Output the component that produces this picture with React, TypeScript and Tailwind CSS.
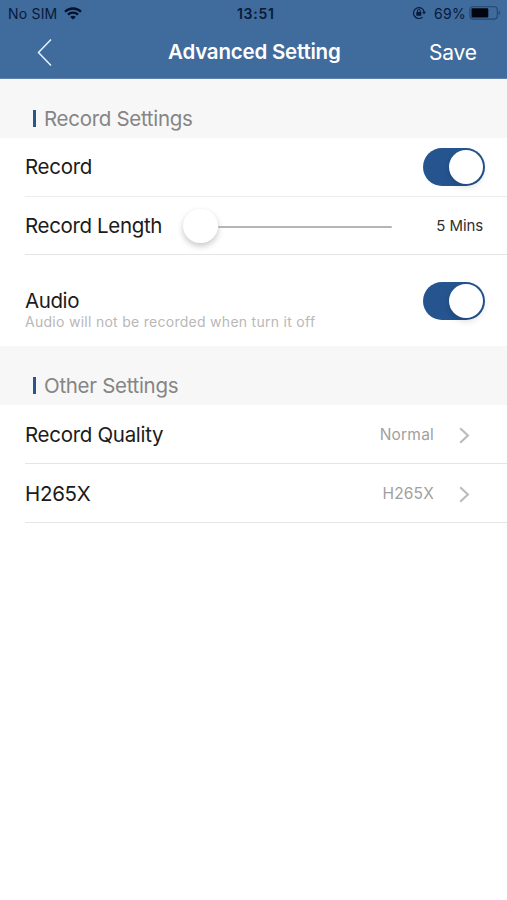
import type { ReactNode } from 'react';

function StatusBar() {
  return (
    <div className="flex h-[27px] items-center text-[14px] leading-[27px] text-[#071a38]">
      <span className="w-[64px] whitespace-nowrap pl-2 tracking-[0.2px]">No SIM</span>
      <svg className="h-[13px] w-[18px]" viewBox="0 0 18 13" fill="none" stroke="#03122c" strokeWidth="2.3">
        <path d="M1 4.7C5.4.4 12.6.4 17 4.7" />
        <path d="M3.9 7.7c2.8-2.7 7.4-2.7 10.2 0" />
        <path d="M6.2 9.9C7.8 8.4 10.2 8.4 11.8 9.9L9 12.6Z" fill="#03122c" stroke="none" />
      </svg>
      <span className="ml-[155px] w-[40px] font-semibold tracking-[0.7px]">13:51</span>
      <svg className="-mt-px ml-[135px] h-[14px] w-[14px]" viewBox="0 0 14 14" fill="none" stroke="#071a38" strokeWidth="1.2">
        <path d="M10.5 11.1A5.4 5.4 0 1 1 12.2 6" />
        <path d="M10.1 5.8h3.8L12 8.5Z" fill="#071a38" stroke="none" />
        <rect x="4.3" y="6.1" width="5" height="3.7" rx=".5" fill="#071a38" stroke="none" />
        <path d="M5.4 6.3V4.9a1.4 1.4 0 0 1 2.8 0v1.4" strokeWidth="1" />
      </svg>
      <span className="ml-2 w-[35px] tracking-[0.3px]">69%</span>
      <svg className="-mt-px h-[14px] w-[32px]" viewBox="0 0 32 14">
        <rect x=".9" y=".7" width="27.4" height="12.4" rx="3" fill="none" stroke="#24466f" strokeWidth="1.1" />
        <rect x="2.5" y="2.3" width="16.8" height="9.2" rx="1.2" fill="#000510" />
        <path d="M29.7 4.8c1.8.5 1.8 3.7 0 4.2Z" fill="#24466f" />
      </svg>
    </div>
  );
}

function SectionTitle({ children }: { children: ReactNode }) {
  return (
    <div className="flex h-[59px] items-end bg-[#f7f7f7] pb-[5px] pl-[33px]">
      <span className="mb-[6px] h-[17px] w-[3px] bg-[#2b568c]" />
      <span className="ml-[8px] text-[20.5px] leading-7 tracking-[-0.3px] text-[#858585]">{children}</span>
    </div>
  );
}

function Toggle() {
  return (
    <span className="flex h-[38px] w-[62px] shrink-0 items-center justify-end rounded-full bg-[#25548f] pr-[2px]">
      <span className="h-[34px] w-[34px] rounded-full bg-white shadow-[0_3px_7px_rgba(0,0,0,0.14)]" />
    </span>
  );
}

function OptionRow({ label, value }: { label: string; value: string }) {
  return (
    <div className="ml-[25px] flex h-[59px] items-center border-b border-[#e5e5e5] pt-[2px]">
      <span className="flex-1 pt-px text-[20.5px] tracking-[-0.3px] text-[#1b1b1b]">{label}</span>
      <span className="text-[15.5px] tracking-[0.2px] text-[#a0a0a0]">{value}</span>
      <svg className="ml-[25px] mr-[37px] h-[17px] w-[11px]" viewBox="0 0 11 17" fill="none" stroke="#bcbcbc" strokeWidth="2.2">
        <path d="m1.2 1.3 7.7 7.2-7.7 7.2" />
      </svg>
    </div>
  );
}

export default function App() {
  return (
    <div className="h-[900px] w-[507px] overflow-hidden bg-white font-['Inter','Liberation_Sans',sans-serif]">
      <header className="h-[79px] border-b border-[#5f83ad] bg-[#406b9d]">
        <StatusBar />
        <div className="flex h-[50px] items-center text-white">
          <svg className="ml-[37px] h-[28px] w-[15px]" viewBox="0 0 15 28" fill="none" stroke="#e6f3ff" strokeWidth="1.5">
            <path d="M14 1.5 1.5 14.5 14 27.5" />
          </svg>
          <h1 className="ml-[116px] w-[261px] pt-px text-[20.5px] font-semibold tracking-[-0.2px]">Advanced Setting</h1>
          <button className="pt-px text-[21px] tracking-[-0.2px]">Save</button>
        </div>
      </header>
      <main>
        <SectionTitle>Record Settings</SectionTitle>
        <div className="ml-[25px] flex h-[59px] items-center justify-between border-b border-[#ececec] pr-[22px] text-[20.5px] tracking-[-0.3px] text-[#1b1b1b]">
          <span className="pt-px">Record</span>
          <Toggle />
        </div>
        <div className="ml-[25px] flex h-[58px] items-center border-b border-[#e5e5e5]">
          <span className="w-[158px] pt-[2px] text-[20.5px] tracking-[-0.35px] text-[#1b1b1b]">Record Length</span>
          <div className="flex w-[209px] items-center">
            <span className="h-[34px] w-[35px] shrink-0 rounded-full bg-white shadow-[0_3px_6px_rgba(0,0,0,0.22)]" />
            <span className="mt-[2px] h-[2px] flex-1 rounded-full bg-[#b5b5b5]" />
          </div>
          <span className="ml-auto mr-[24px] pt-px text-[15px] tracking-[-0.1px] text-[#303030]">5 Mins</span>
        </div>
        <div className="flex h-[91px] items-center justify-between pl-[25px] pr-[22px]">
          <div className="pt-[18px]">
            <div className="text-[20.5px] leading-6 tracking-[-0.4px] text-[#1b1b1b]">Audio</div>
            <div className="text-[14px] leading-[18px] tracking-[0.28px] text-[#b8b8b8]">Audio will not be recorded when turn it off</div>
          </div>
          <Toggle />
        </div>
        <SectionTitle>Other Settings</SectionTitle>
        <OptionRow label="Record Quality" value="Normal" />
        <OptionRow label="H265X" value="H265X" />
      </main>
    </div>
  );
}
